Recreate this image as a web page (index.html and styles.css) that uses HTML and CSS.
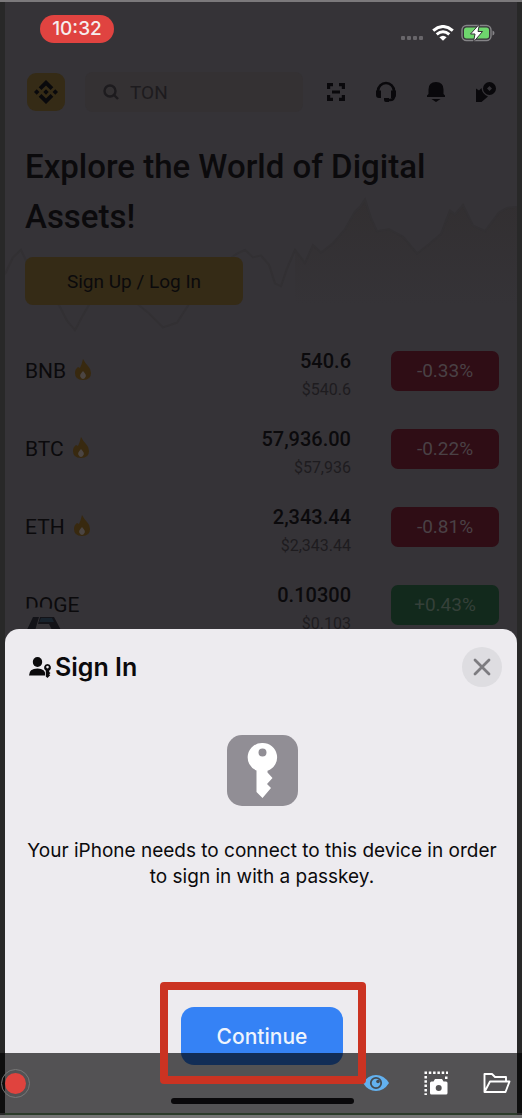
FILE: index.html
```
<!DOCTYPE html>
<html lang="en">
<head>
<meta charset="utf-8">
<meta name="viewport" content="width=device-width, initial-scale=1">
<title>Sign In</title>
<link rel="stylesheet" href="styles.css">
</head>
<body>
<div class="window">
  <main class="app">
    <div class="status">
      <span class="clock">10:32</span>
      <span class="status-icons">
        <svg width="24" height="16" viewBox="0 0 24 16" fill="#68666a"><rect x="0" y="11" width="4" height="4" rx="1"/><rect x="6" y="11" width="4" height="4" rx="1"/><rect x="12" y="11" width="4" height="4" rx="1"/><rect x="18" y="11" width="4" height="4" rx="1"/></svg>
        <svg width="22" height="16" viewBox="0 0 22 16" fill="none" stroke="#fff" stroke-width="3"><path d="M1.2 5.600Q11-2.600 20.800 5.600"/><path d="M4.700 9.400Q11 4 17.300 9.400"/><path d="M11 15.800L7.400 12.200Q11 9.200 14.600 12.200Z" fill="#fff" stroke="none"/></svg>
        <svg width="34" height="18" viewBox="0 0 34 18"><rect x="1" y="1.500" width="29" height="15" rx="4.500" fill="none" stroke="#858487" stroke-width="1.400"/><rect x="3" y="3.500" width="25" height="11" rx="2.500" fill="#6ed66d"/><path d="M31.500 6.500q2 .5 2 2.500t-2 2.500z" fill="#858487"/><path d="M18.500 0L9.500 10H14l-1.500 8L21.500 7.500H17z" fill="#fff" stroke="#353337" stroke-width="1"/></svg>
      </span>
    </div>

    <header class="topbar">
      <a class="logo" href="#" aria-label="Home">
        <svg width="24" height="26" viewBox="0 0 24 26" fill="#09090c"><path d="M12 1l7.300 7.300-2.700 2.700L12 6.400 7.400 11 4.700 8.300z"/><path d="M12 25l7.300-7.300-2.700-2.700L12 19.600 7.400 15l-2.700 2.700z"/><path d="M12 10.300l2.700 2.700-2.700 2.700L9.300 13z"/><path d="M2.700 10.300L5.400 13l-2.700 2.700L0 13z"/><path d="M21.300 10.300L24 13l-2.700 2.700-2.700-2.700z"/></svg>
      </a>
      <label class="search">
        <svg width="16" height="16" viewBox="0 0 16 16" fill="none" stroke="#1d1b1e" stroke-width="2.400"><circle cx="7" cy="7" r="5.500"/><path d="M10.500 10.500L15 15"/></svg>
        <input type="text" placeholder="TON" aria-label="Search">
      </label>
      <nav class="actions">
        <button aria-label="Scan"><svg width="20" height="20" viewBox="0 0 20 20" fill="none" stroke="#09080b" stroke-width="3.200"><path d="M2.600 7V2.600H7M13 2.600h4.400V7M17.400 13v4.400H13M7 17.400H2.600V13M6 10h8"/></svg></button>
        <button aria-label="Support"><svg width="22" height="22" viewBox="0 0 22 22"><path d="M3 12v-2a8 8 0 0 1 16 0v5q0 4-4 4h-3" fill="none" stroke="#09080b" stroke-width="2.600"/><path d="M1 9.500h5V17H4q-3 0-3-3zM16 9.500h5V14q0 3-3 3h-2zM9 17h5v4H11q-2 0-2-2z" fill="#09080b"/></svg></button>
        <button aria-label="Notifications"><svg width="20" height="22" viewBox="0 0 20 22" fill="#09080b"><path d="M2.500 13V8.500Q2.500 1 10 1t7.500 7.500V13l1.500 1.500V16H1v-1.500zM5.500 18h9L10 21z"/></svg></button>
        <button aria-label="Profile"><svg width="22" height="22" viewBox="0 0 22 22" fill="#09080b"><path fill-rule="evenodd" d="M14.500 1a6.500 6.500 0 1 1 0 13 6.500 6.500 0 0 1 0-13zm0 4l-2.500 2.500 2.500 2.500 2.500-2.500z"/><path d="M1 7.500l3 2L6.500 7q.5 6 6.500 8.500L6.500 21H1z"/></svg></button>
      </nav>
    </header>

    <section class="hero">
      <svg class="hero-chart" viewBox="0 0 512 150" preserveAspectRatio="none">
        <defs><linearGradient id="fade" x1="0" x2="0" y1="0" y2="1"><stop offset="0" stop-color="#322f31"/><stop offset=".8" stop-color="#353337"/></linearGradient></defs>
        <path fill="url(#fade)" d="M290 62L300 76 308 57 316 65 328 55 340 40 350 21 355 16 360 8 366 28 372 42 384 40 398 48 412 66 424 56 436 45 445 20 450 24 458 14 468 36 480 42 494 22 502 17 512 16V150H290z"/>
        <path class="hero-line" d="M0 88L8 70 16 62 22 76 40 108 52 117 62 138 70 148 78 132 90 110M130 118L144 130 158 145 172 140 184 120 200 116 222 74 232 66 240 62 248 70 256 68 264 78 270 98 276 101 282 82 290 62 300 76 308 57 316 65 328 55 340 40 350 21 355 16 360 8 366 28 372 42 384 40 398 48 412 66 424 56 436 45 445 20 450 24 458 14 468 36 480 42 494 22 502 17 512 16"/>
      </svg>
      <h1>Explore the World of Digital Assets!</h1>
      <button class="signup">Sign Up / Log In</button>
    </section>

    <table class="market">
      <tr>
        <th scope="row">BNB <svg class="flame" width="18" height="22" viewBox="0 0 18 22"><path fill="#38290f" d="M9 0q2 4 5 7 3 3 3 7 0 7-8 7t-8-7q0-4 3-6l2 1Q8 5 9 0z"/><path fill="#4b4542" d="M9 12q4 4 2.500 6-1 2-2.500 2t-2.500-2Q5 16 9 12z"/></svg></th>
        <td><b>540.6</b><small>$540.6</small></td><td class="change"><span>-0.33%</span></td>
      </tr>
      <tr>
        <th scope="row">BTC <svg class="flame" width="18" height="22" viewBox="0 0 18 22"><path fill="#38290f" d="M9 0q2 4 5 7 3 3 3 7 0 7-8 7t-8-7q0-4 3-6l2 1Q8 5 9 0z"/><path fill="#4b4542" d="M9 12q4 4 2.500 6-1 2-2.500 2t-2.500-2Q5 16 9 12z"/></svg></th>
        <td><b>57,936.00</b><small>$57,936</small></td><td class="change"><span>-0.22%</span></td>
      </tr>
      <tr>
        <th scope="row">ETH <svg class="flame" width="18" height="22" viewBox="0 0 18 22"><path fill="#38290f" d="M9 0q2 4 5 7 3 3 3 7 0 7-8 7t-8-7q0-4 3-6l2 1Q8 5 9 0z"/><path fill="#4b4542" d="M9 12q4 4 2.500 6-1 2-2.500 2t-2.500-2Q5 16 9 12z"/></svg></th>
        <td><b>2,343.44</b><small>$2,343.44</small></td><td class="change"><span>-0.81%</span></td>
      </tr>
      <tr>
        <th scope="row"><span class="tabbed">DOGE<svg class="tab-bump" width="48" height="28" viewBox="0 0 48 28"><path fill="#353337" d="M0 28V3Q18-1 30 4l6 7 6 17z"/><path fill="#131318" d="M8 11H14L9 28H0zM15 11H29L38 28H29L24 18H13z"/><path fill="#18232d" d="M16 12H27l2 4H14z"/></svg></span></th>
        <td><b>0.10300</b><small>$0.103</small></td><td class="change up"><span>+0.43%</span></td>
      </tr>
    </table>
  </main>

  <section class="sheet" role="dialog" aria-labelledby="sheet-title">
    <div class="sheet-head">
      <svg width="24" height="24" viewBox="0 0 24 24" fill="#0b0a0c"><ellipse cx="9.500" cy="7" rx="4.700" ry="5"/><path d="M1 20.500Q1 13.500 9.500 13.500q4 0 6 1.800l1.500 2v3.200z"/><path fill-rule="evenodd" d="M19.500 9a3.600 3.600 0 0 1 1.700 6.700V17l1.300 1-1.300 1.200 1 1-2.700 2.800-1.700-1.500v-5.800A3.600 3.600 0 0 1 19.500 9zm0 1.800a1.300 1.300 0 1 0 0 2.600 1.300 1.300 0 0 0 0-2.600z"/></svg>
      <h2 id="sheet-title">Sign In</h2>
      <button class="close" aria-label="Close"><svg width="18" height="18" viewBox="0 0 18 18" stroke="#7d7c80" stroke-width="2.800" stroke-linecap="round"><path d="M2 2l14 14M16 2L2 16"/></svg></button>
    </div>
    <svg class="passkey" width="71" height="71" viewBox="0 0 71 71"><rect width="71" height="71" rx="15" fill="#918e95"/><path fill="#fff" fill-rule="evenodd" d="M35.500 8a14.300 14.300 0 0 1 5 27.800v1.700l5 5.500-5.500 6 4 4-8.500 10-6-6V35.500A14.300 14.300 0 0 1 35.500 8zm0 5.500a4 4 0 1 0 0 8 4 4 0 0 0 0-8z"/></svg>
    <p>Your iPhone needs to connect to this device in order to sign in with a passkey.</p>
    <div class="confirm">
      <button class="continue">Continue</button>
      <span class="highlight"></span>
    </div>
    <span class="home-bar"></span>
  </section>

  <div class="recorder">
    <button class="record" aria-label="Record"></button>
    <button class="tool" aria-label="Preview"><svg width="26" height="18" viewBox="0 0 26 18"><path fill="#63b1ef" d="M0 9Q5 1 13 1t13 8q-5 8-13 8T0 9z"/><circle cx="13" cy="9" r="5.200" fill="none" stroke="#444a50" stroke-width="1.800"/><circle cx="15" cy="7.500" r="1.800" fill="#444a50"/></svg></button>
    <button class="tool" aria-label="Snapshot"><svg width="24" height="24" viewBox="0 0 24 24"><path fill="none" stroke="#fff" stroke-width="2.500" stroke-dasharray="2.500 1.800" d="M.5 1.700H24M1.700 5V24"/><path fill="#fff" d="M21 5.500h2.500V8H21z"/><path fill="#fff" fill-rule="evenodd" d="M11 8h7l1.500 2.500H22q1.500 0 1.500 1.500v10q0 1.500-1.500 1.500H7.500Q6 23.500 6 22V12q0-1.500 1.500-1.500h2zm3.700 6a3 3 0 1 0 0 6 3 3 0 0 0 0-6z"/></svg></button>
    <button class="tool" aria-label="Open folder"><svg width="28" height="22" viewBox="0 0 28 22" fill="none" stroke="#fff" stroke-width="1.900" stroke-linejoin="round"><path d="M1.500 20V2H9l3 3h11v4.500M1.500 20L7 9.500h19.500L22.500 20z"/></svg></button>
  </div>
</div>
</body>
</html>
```
FILE: styles.css
```
* { box-sizing: border-box; }

body {
  margin: 0;
  background: #282828;
  font-family: Inter, "Liberation Sans", sans-serif;
  color: #0b0a0c;
}

button { border: 0; padding: 0; background: none; font: inherit; color: inherit; }
svg { display: block; flex: none; }

.window {
  position: relative;
  min-height: 100vh;
  padding: 0 5px;
  border-top: 2px solid #7b797b;
  border-bottom: 3px solid #747474;
  overflow: hidden;
  display: flex;
}

.app {
  flex: 1;
  min-width: 0;
  background: #353337;
  font-family: Roboto, "Liberation Sans", sans-serif;
}

.status {
  height: 54px;
  padding: 0 22px 0 35px;
  display: flex;
  align-items: center;
  justify-content: space-between;
}

.clock {
  width: 74px;
  line-height: 28px;
  border-radius: 14px;
  background: #e04340;
  color: #f6eeee;
  font-family: Inter, sans-serif;
  font-size: 19px;
  font-weight: 500;
  text-align: center;
}

.status-icons { display: flex; align-items: center; gap: 7px; margin-top: 8px; }

.topbar {
  display: flex;
  align-items: center;
  padding: 16px 20px 0 22px;
}

.logo {
  width: 38px;
  height: 38px;
  border-radius: 9px;
  background: #352b16;
  display: grid;
  place-items: center;
}

.search {
  flex: 1;
  min-width: 0;
  height: 40px;
  margin: 0 22px 0 20px;
  padding: 0 18px;
  border-radius: 8px;
  background: #343133;
  display: flex;
  align-items: center;
  gap: 11px;
}

.search input {
  width: 100%;
  min-width: 0;
  padding: 0;
  border: 0;
  background: none;
  font: 19px Roboto, sans-serif;
}

.search input::placeholder { color: #1d1b1e; opacity: 1; }

.actions { display: flex; gap: 28px; }
.actions button { width: 22px; display: grid; place-items: center; }

.hero { position: relative; padding: 30px 20px 0; }
.hero > h1, .signup { position: relative; }

.hero-chart {
  position: absolute;
  left: 0;
  top: 80px;
  width: 100%;
  height: 140px;
}

.hero-line { fill: none; stroke: #323033; stroke-width: 2; }

h1 {
  margin: 0;
  font-size: 33px;
  font-weight: 500;
  line-height: 50px;
}

.signup {
  width: 218px;
  height: 48px;
  margin-top: 15px;
  border-radius: 8px;
  background: #352b16;
  font-size: 19px;
}

.market {
  width: 100%;
  margin-top: 27px;
  border-collapse: collapse;
}

.market tr { height: 78px; }
.market td, .market th { padding: 0; }
.market th { padding-left: 20px; text-align: left; font-size: 21px; font-weight: 400; }
.market td { padding-top: 6px; text-align: right; }
.flame { display: inline-block; vertical-align: -3px; margin-left: 3px; }
.market b { display: block; font-size: 20px; font-weight: 500; line-height: 32px; }
.market small { display: block; font-size: 16px; line-height: 26px; color: #1e1c1f; }
.market .change { width: 166px; padding: 0 18px 0 0; }

.change span {
  display: block;
  margin-left: 40px;
  line-height: 40px;
  border-radius: 7px;
  background: #2f0d15;
  color: #4a4145;
  font-size: 19px;
  text-align: center;
}

.change.up span { background: #12291c; color: #354039; }

.tabbed { position: relative; }
.tab-bump { position: absolute; left: 0; top: 13px; }

.sheet {
  position: absolute;
  left: 5px;
  right: 5px;
  bottom: 0;
  padding: 18px 15px 9px 17px;
  border-radius: 14px 14px 0 0;
  border-bottom: 2px solid #2b3b2a;
  background: #edebef;
  display: flex;
  flex-direction: column;
  align-items: center;
}

.sheet-head {
  align-self: stretch;
  padding-left: 6px;
  display: flex;
  align-items: center;
  gap: 3px;
}

h2 { margin: 0; font-size: 25px; font-weight: 600; line-height: 40px; }

.close {
  width: 40px;
  height: 40px;
  margin-left: auto;
  border-radius: 50%;
  background: #dedde1;
  display: grid;
  place-items: center;
}

.passkey { margin-top: 48px; }

.sheet p {
  margin: 32px 0 0;
  font-size: 19px;
  line-height: 26px;
  text-align: center;
}

.confirm { position: relative; margin-top: 117px; }

.continue {
  width: 162px;
  height: 58px;
  border-radius: 13px;
  background: #3582f5;
  color: #eef4fd;
  font-size: 21px;
  font-weight: 500;
}

.highlight {
  position: absolute;
  z-index: 3;
  inset: -25px -23px -19px -21px;
  border: 8px solid #cb3322;
  border-radius: 4px;
  pointer-events: none;
}

.home-bar {
  width: 183px;
  height: 6px;
  margin-top: 33px;
  border-radius: 3px;
  background: #09080a;
  position: relative;
  z-index: 3;
}

.recorder {
  position: absolute;
  z-index: 2;
  left: 0;
  right: 0;
  bottom: 2px;
  height: 60px;
  padding: 0 11px 0 1px;
  background: rgba(0, 0, 0, .65);
  display: flex;
  align-items: center;
  gap: 35px;
}

.record {
  width: 29px;
  height: 29px;
  margin-right: auto;
  border: 1px solid #777;
  border-radius: 50%;
  padding: 3px;
  background: #e0433e content-box;
}
```
